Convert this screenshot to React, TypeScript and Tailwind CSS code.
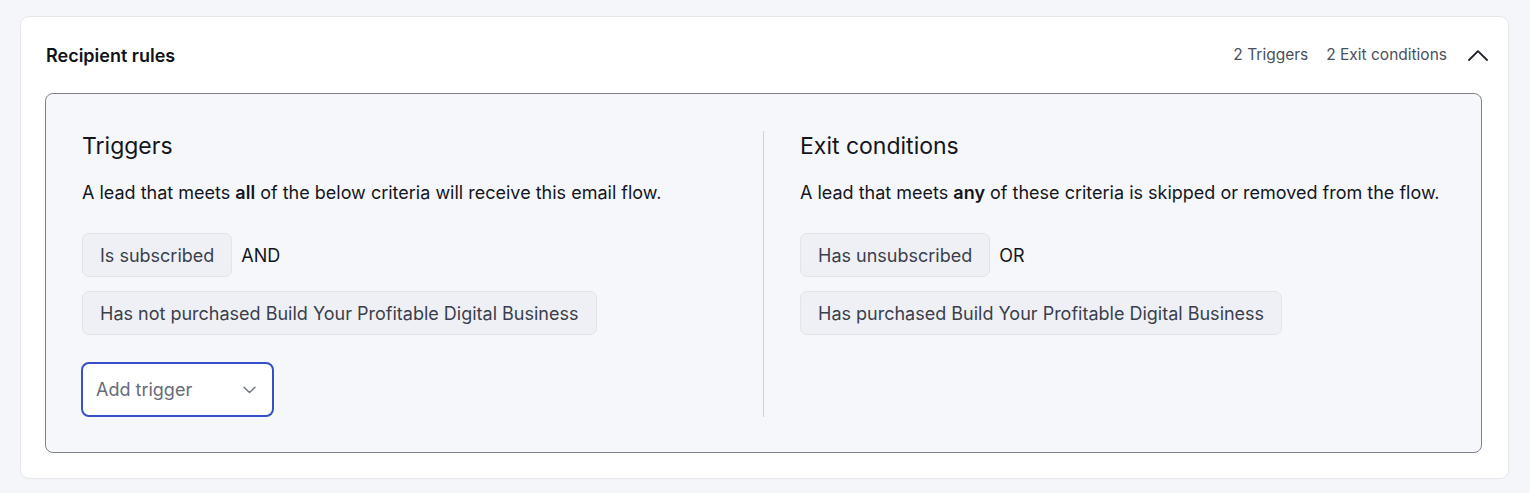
type Rule = { label: string; joiner?: string };

const triggers: Rule[] = [
  { label: "Is subscribed", joiner: "AND" },
  { label: "Has not purchased Build Your Profitable Digital Business" },
];

const exits: Rule[] = [
  { label: "Has unsubscribed", joiner: "OR" },
  { label: "Has purchased Build Your Profitable Digital Business" },
];

function RuleChip({ rule }: { rule: Rule }) {
  return (
    <div className="flex items-center gap-[9px]">
      <span className="inline-flex h-[44px] items-center rounded-[7px] border border-[#e2e4ea] bg-[#eff0f5] px-[17px] text-[18px] text-[#3a3f4b]">
        {rule.label}
      </span>
      {rule.joiner ? <span className="text-[18px] text-[#14161c]">{rule.joiner}</span> : null}
    </div>
  );
}

function RuleColumn({
  title,
  children,
  rules,
  footer,
}: {
  title: string;
  children: React.ReactNode;
  rules: Rule[];
  footer?: React.ReactNode;
}) {
  return (
    <div className="flex flex-1 flex-col">
      <h3 className="text-[23px] leading-[30px] text-[#14161c]">{title}</h3>
      <p className="mt-[19px] text-[18px] leading-[26px] text-[#14161c]">{children}</p>
      <div className="mt-[27px] flex flex-col items-start gap-[14px]">
        {rules.map((rule) => (
          <RuleChip key={rule.label} rule={rule} />
        ))}
      </div>
      {footer}
    </div>
  );
}

export default function App() {
  return (
    <div
      className="min-h-screen bg-[#f5f6fa] pl-[20px] pr-[21px] pt-[16px]"
      style={{ fontFamily: "Inter, 'Noto Sans', sans-serif" }}
    >
      <section className="rounded-[9px] border border-[#e6e7eb] bg-white pb-[25px] pl-[24px] pr-[26px]">
        <div className="flex h-[76px] items-center justify-between">
          <h2 className="ml-px text-[18px] font-semibold text-[#111318]">Recipient rules</h2>
          <div className="flex items-center text-[15.5px] text-[#4a505c]">
            <span>2 Triggers</span>
            <span className="ml-[18px]">2 Exit conditions</span>
            <svg className="ml-[21px] mr-[-6px]" width="20" height="11" viewBox="0 0 20 11" fill="none">
              <path d="M1 10L10 1.2L19 10" stroke="#1e2128" strokeWidth="1.8" strokeLinecap="round" strokeLinejoin="round" />
            </svg>
          </div>
        </div>

        <div className="flex rounded-[8px] border border-[#80818a] bg-[#f6f7fb] px-[36px] pb-[35px] pt-[37px]">
          <RuleColumn
            title="Triggers"
            rules={triggers}
            footer={
              <button
                type="button"
                className="-ml-px mt-[27px] flex h-[55px] w-[193px] items-center justify-between rounded-[8px] border-2 border-[#3650c8] bg-white pl-[13px] pr-[16px] text-[18px] text-[#666b76]"
              >
                Add trigger
                <svg width="13" height="8" viewBox="0 0 13 8" fill="none">
                  <path d="M1 1.2L6.5 6.5L12 1.2" stroke="#6e7380" strokeWidth="1.4" strokeLinecap="round" strokeLinejoin="round" />
                </svg>
              </button>
            }
          >
            A lead that meets <b className="font-semibold">all</b> of the below criteria will receive
            this email flow.
          </RuleColumn>

          <div className="mx-[36px] w-px bg-[#cfd1d6]" />

          <RuleColumn title="Exit conditions" rules={exits}>
            A lead that meets <b className="font-semibold">any</b> of these criteria is skipped or
            removed from the flow.
          </RuleColumn>
        </div>
      </section>
    </div>
  );
}
